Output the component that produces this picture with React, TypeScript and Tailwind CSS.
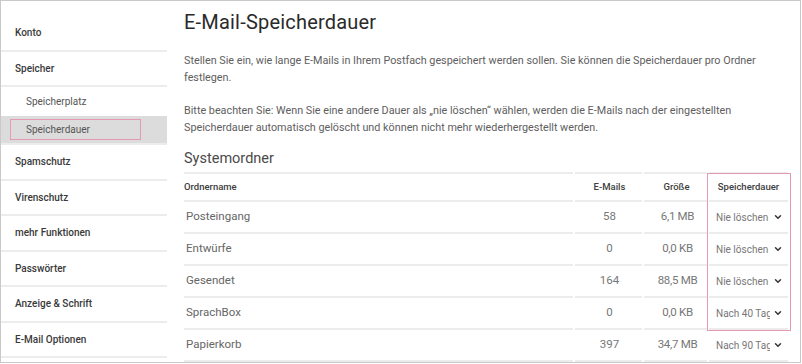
import { ChevronDown } from "lucide-react"

const nav = [
  { label: "Konto" },
  { label: "Speicher" },
]
const navAfter = ["Spamschutz", "Virenschutz", "mehr Funktionen", "Passwörter", "Anzeige & Schrift", "E-Mail Optionen"]

const rows = [
  { name: "Posteingang", mails: "58", size: "6,1 MB", keep: "Nie löschen" },
  { name: "Entwürfe", mails: "0", size: "0,0 KB", keep: "Nie löschen" },
  { name: "Gesendet", mails: "164", size: "88,5 MB", keep: "Nie löschen" },
  { name: "SprachBox", mails: "0", size: "0,0 KB", keep: "Nach 40 Tagen" },
  { name: "Papierkorb", mails: "397", size: "34,7 MB", keep: "Nach 90 Tagen" },
]

function NavItem({ label }: { label: string }) {
  return (
    <div className="h-[35.5px] flex items-center pl-[14px] border-b-2 border-[#ececec] text-[10px] font-medium text-[#3a3a3a]">
      {label}
    </div>
  )
}

export default function App() {
  return (
    <div
      className="w-[801px] h-[363px] border border-[#c9c9c9] bg-white flex overflow-hidden"
      style={{ fontFamily: "Roboto, 'Noto Sans', sans-serif" }}
    >
      {/* Sidebar */}
      <aside className="w-[166px] shrink-0 pt-[15px]">
        {nav.map((n) => (
          <NavItem key={n.label} label={n.label} />
        ))}
        <div className="h-[29px] flex items-center pl-[25px] text-[10px] text-[#555]">Speicherplatz</div>
        <div className="h-[29px] bg-[#dcdcdc] flex items-center px-[9px] border-b-2 border-[#ececec]">
          <div className="w-[131px] h-[21px] border border-[#e59ab3] flex items-center pl-[15px] text-[10px] text-[#555]">
            Speicherdauer
          </div>
        </div>
        {navAfter.map((n) => (
          <NavItem key={n} label={n} />
        ))}
      </aside>

      {/* Main */}
      <main className="flex-1 pl-[17px] pr-[14px]">
        <h1 className="text-[20px] leading-[28px] mt-[7px] text-[#2a2a2a] tracking-[0.2px]">E-Mail-Speicherdauer</h1>
        <p className="mt-[17px] text-[10.8px] leading-[16.5px] text-[#5e5e5e]">
          Stellen Sie ein, wie lange E-Mails in Ihrem Postfach gespeichert werden sollen. Sie können die Speicherdauer pro Ordner festlegen.
        </p>
        <p className="mt-[17px] text-[10.8px] leading-[16.5px] text-[#5e5e5e]">
          Bitte beachten Sie: Wenn Sie eine andere Dauer als „nie löschen“ wählen, werden die E-Mails nach der eingestellten Speicherdauer automatisch gelöscht und können nicht mehr wiederhergestellt werden.
        </p>
        <h2 className="mt-[13px] text-[14.5px] leading-[20px] text-[#4a4a4a]">Systemordner</h2>

        <div className="relative mt-[3px] w-[602px]">
          <div className="grid grid-cols-[389px_67px_63px_79px] gap-x-[2px]">
            <div className="h-[30px] border-y-2 border-[#ececec] flex items-center text-[9.5px] font-medium text-[#404040]">Ordnername</div>
            <div className="h-[30px] border-y-2 border-[#ececec] flex items-center justify-center pl-[2px] text-[9.5px] font-medium text-[#404040]">E-Mails</div>
            <div className="h-[30px] border-y-2 border-[#ececec] flex items-center justify-center pl-[2px] text-[9.5px] font-medium text-[#404040]">Größe</div>
            <div className="h-[30px] border-y-2 border-[#ececec] flex items-center justify-center text-[9.5px] font-medium text-[#404040]">Speicherdauer</div>
            {rows.map((r) => (
              <Row key={r.name} {...r} />
            ))}
          </div>
          <div className="absolute left-[523px] top-[1px] w-[84px] h-[158px] border border-[#e59ab3] pointer-events-none" />
        </div>
      </main>
    </div>
  )
}

function Row({ name, mails, size, keep }: { name: string; mails: string; size: string; keep: string }) {
  return (
    <>
      <div className="h-[32px] border-b-2 border-[#ececec] flex items-center pl-[2px] text-[11.5px] text-[#666]">{name}</div>
      <div className="h-[32px] border-b-2 border-[#ececec] flex items-center justify-center pl-[2px] text-[11.5px] text-[#777]">{mails}</div>
      <div className="h-[32px] border-b-2 border-[#ececec] flex items-center justify-center pl-[4px] text-[11.5px] text-[#777] tracking-[-0.3px]">{size}</div>
      <div className="h-[32px] border-b-2 border-[#ececec] flex items-center pl-[7px] text-[10px] text-[#777]">
        <span className="w-[54px] overflow-hidden whitespace-nowrap">{keep}</span>
        <ChevronDown className="ml-[3px] w-[10px] h-[10px] text-[#333]" strokeWidth={3.5} />
      </div>
    </>
  )
}
